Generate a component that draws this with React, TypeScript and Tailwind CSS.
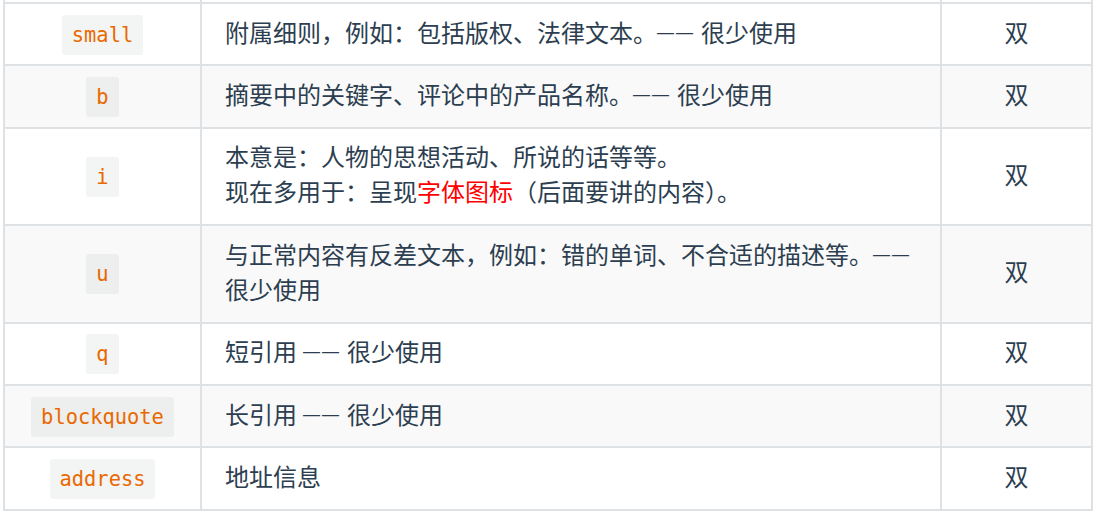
import React from 'react';

type Row = {
  tag: string;
  desc: React.ReactNode;
};

// the double dash in the source is narrower than a CJK em dash
const Dash = () => (
  <span
    className="text-[17px] leading-none tracking-[2px] align-[4px]"
    style={{ fontFamily: '"Liberation Sans", sans-serif' }}
  >
    ——
  </span>
);

const rows: Row[] = [
  { tag: 'small', desc: <>附属细则，例如：包括版权、法律文本。<Dash /> 很少使用</> },
  { tag: 'b', desc: <>摘要中的关键字、评论中的产品名称。<Dash /> 很少使用</> },
  {
    tag: 'i',
    desc: (
      <>
        本意是：人物的思想活动、所说的话等等。
        <br />
        现在多用于：呈现<span className="text-[#ff0000]">字体图标</span>（后面要讲的内容）。
      </>
    ),
  },
  { tag: 'u', desc: <>与正常内容有反差文本，例如：错的单词、不合适的描述等。<Dash /> 很少使用</> },
  { tag: 'q', desc: <>短引用 <Dash /> 很少使用</> },
  { tag: 'blockquote', desc: <>长引用 <Dash /> 很少使用</> },
  { tag: 'address', desc: '地址信息' },
];

const cell = 'border-2 border-[#dfe2e5] py-[12.5px] px-[23px] align-middle';
const edge = 'h-[3px] p-0 border-x-2 border-t-0 border-b-2 border-[#dfe2e5]';

export default function App() {
  return (
    <div
      className="h-[517px] w-[1098px] overflow-hidden bg-white pl-[3px] text-[#2c3e50] text-[24px] leading-[35.3px]"
      style={{ fontFamily: 'Roboto, "Noto Sans CJK SC", sans-serif' }}
    >
      <table className="w-[1090px] table-fixed border-collapse">
        <colgroup>
          <col className="w-[197px]" />
          <col className="w-[740px]" />
          <col className="w-[151px]" />
        </colgroup>
        <tbody>
          {/* bottom sliver of the row scrolled above */}
          <tr className="h-[3px] bg-white">
            <td className={edge} />
            <td className={edge} />
            <td className={edge} />
          </tr>
          {rows.map((r, i) => (
            <tr key={r.tag} className={i % 2 === 1 ? 'bg-[#f9f9f9]' : 'bg-white'}>
              <td className={cell + ' text-center'}>
                <code
                  className="rounded-[3px] bg-[rgba(27,31,35,0.05)] px-[10px] py-[8px] text-[20.4px] leading-none text-[#e96900]"
                  style={{ fontFamily: '"DejaVu Sans Mono", monospace' }}
                >
                  {r.tag}
                </code>
              </td>
              <td className={cell}>{r.desc}</td>
              <td className={cell + ' text-center'}>双</td>
            </tr>
          ))}
        </tbody>
      </table>
    </div>
  );
}
